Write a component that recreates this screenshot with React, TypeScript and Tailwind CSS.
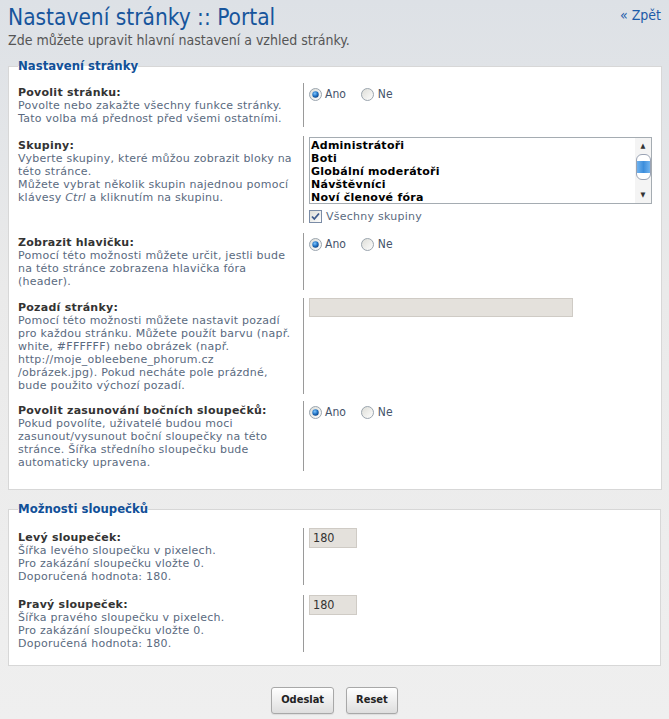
import React from 'react';

const font = "font-['DejaVu_Sans_Condensed','DejaVu_Sans',sans-serif]";
const body = "font-['DejaVu_Sans',sans-serif] text-[11px] leading-[13px] tracking-[0.25px]";

const Radio: React.FC<{ checked?: boolean }> = ({ checked }) => (
    <svg width="13" height="13" viewBox="0 0 13 13" className="shrink-0">
        <defs>
            <linearGradient id="rb" x1="0" y1="0" x2="1" y2="1">
                <stop offset="0" stopColor="#dcdcd6" />
                <stop offset="1" stopColor="#ffffff" />
            </linearGradient>
            <radialGradient id="rd" cx="0.4" cy="0.35" r="0.7">
                <stop offset="0" stopColor="#7fc6ff" />
                <stop offset="0.6" stopColor="#1e6fc0" />
                <stop offset="1" stopColor="#0c3f80" />
            </radialGradient>
        </defs>
        <circle cx="6.5" cy="6.5" r="6" fill="url(#rb)" stroke="#9ba5ae" strokeWidth="1" />
        {checked && <circle cx="6.5" cy="6.5" r="3.2" fill="url(#rd)" />}
    </svg>
);

const YesNo: React.FC = () => (
    <div className="flex items-center text-[12px] leading-[14px] text-[#45546b] pt-[4px]">
        <Radio checked />
        <span className="ml-[3px]">Ano</span>
        <span className="ml-[15px]" />
        <Radio />
        <span className="ml-[4px]">Ne</span>
    </div>
);

const Row: React.FC<{ label: string; lines: React.ReactNode[]; children: React.ReactNode; gap?: string }> = ({
    label,
    lines,
    children,
    gap = 'mb-[9px]',
}) => (
    <div className={`flex ${gap}`}>
        <div className={`${body} w-[285px] shrink-0 pt-[3px] pb-[2px]`}>
            <div className="font-bold text-[#333333]">{label}</div>
            {lines.map((l, i) => (
                <div key={i} className="text-[#5a6a80]">
                    {l}
                </div>
            ))}
        </div>
        <div className="border-l border-[#9a9a9a] pl-[5px] flex-1">{children}</div>
    </div>
);

const Input: React.FC<{ className: string; value?: string }> = ({ className, value }) => (
    <div
        className={`${className} bg-[#e4e1dc] border border-[#cfcbc5] text-[12.5px] leading-[16px] text-[#333] pl-[3px]`}
    >
        {value}
    </div>
);

const groups = ['Administrátoři', 'Boti', 'Globální moderátoři', 'Návštěvníci', 'Noví členové fóra'];

const btn =
    'h-[27px] px-[9px] rounded-[3px] border border-[#a8a8a8] bg-gradient-to-b from-[#ffffff] to-[#dedede] text-[11px] font-bold text-[#222] shadow-[0_1px_1px_rgba(0,0,0,0.08)]';

const App: React.FC = () => {
    return (
        <div className={`${font} min-h-[719px] bg-gradient-to-b from-[#dde1e6] via-[#eaeaea] via-40% to-[#efefef] px-[8px] pt-[3px]`}>
            {/* Header */}
            <div className="flex justify-between items-start">
                <h1 className="text-[22.5px] leading-[28px] text-[#17559c]">Nastavení stránky :: Portal</h1>
                <a className="text-[14px] leading-[16px] mt-[4px] text-[#1c5aa8]">« Zpět</a>
            </div>
            <p className="text-[14px] leading-[16px] text-[#555] mt-[1px]">
                Zde můžete upravit hlavní nastavení a vzhled stránky.
            </p>

            {/* Fieldset 1 */}
            <fieldset className="mt-[11px] border border-[#d7d7d7] bg-white px-[9px] pt-[10px] pb-[18px]">
                <legend className="text-[13px] leading-[14px] font-bold text-[#115098]">Nastavení stránky</legend>

                <Row
                    label="Povolit stránku:"
                    lines={['Povolte nebo zakažte všechny funkce stránky.', 'Tato volba má přednost před všemi ostatními.']}
                >
                    <YesNo />
                </Row>

                <Row
                    label="Skupiny:"
                    lines={[
                        'Vyberte skupiny, které můžou zobrazit bloky na',
                        'této stránce.',
                        'Můžete vybrat několik skupin najednou pomocí',
                        <>
                            klávesy <i>Ctrl</i> a kliknutím na skupinu.
                        </>,
                    ]}
                    gap="mb-[10px]"
                >
                    <div className="pt-[1px]">
                        <div className="w-[343px] h-[67px] border border-[#a5acb2] bg-white flex">
                            <div className="flex-1 pl-[1px] pt-[1px] overflow-hidden">
                                {groups.map((g) => (
                                    <div key={g} className={`${body} font-bold text-black`}>
                                        {g}
                                    </div>
                                ))}
                            </div>
                            {/* scrollbar */}
                            <div className="w-[16px] bg-[#f4f4f4] flex flex-col items-center">
                                <div className="h-[16px] flex items-center justify-center text-[7px] text-[#333]">▲</div>
                                <div className="w-[15px] h-[26px] rounded-[6px] border border-[#9aa3b4] bg-white flex items-center">
                                    <div className="w-full h-[12px] bg-gradient-to-r from-[#6fb2ee] via-[#3c8edc] to-[#6fb2ee]" />
                                </div>
                                <div className="flex-1" />
                                <div className="h-[16px] flex items-center justify-center text-[7px] text-[#333]">▼</div>
                            </div>
                        </div>
                        <div className={`${body} flex items-center mt-[6px] text-[#5a6a80]`}>
                            <svg width="13" height="13" viewBox="0 0 13 13" className="mr-[4px]">
                                <defs>
                                    <linearGradient id="cb" x1="0" y1="0" x2="1" y2="1">
                                        <stop offset="0" stopColor="#dcdcd6" />
                                        <stop offset="1" stopColor="#ffffff" />
                                    </linearGradient>
                                </defs>
                                <rect x="0.5" y="0.5" width="12" height="12" fill="url(#cb)" stroke="#7b8ca6" />
                                <path d="M3 6.5 L5.3 9 L10 3.5" fill="none" stroke="#3d5a8c" strokeWidth="1.8" />
                            </svg>
                            Všechny skupiny
                        </div>
                    </div>
                </Row>

                <Row
                    label="Zobrazit hlavičku:"
                    lines={[
                        'Pomocí této možnosti můžete určit, jestli bude',
                        'na této stránce zobrazena hlavička fóra',
                        '(header).',
                    ]}
                    gap="mb-[8px]"
                >
                    <YesNo />
                </Row>

                <Row
                    label="Pozadí stránky:"
                    lines={[
                        'Pomocí této možnosti můžete nastavit pozadí',
                        'pro každou stránku. Můžete použít barvu (např.',
                        'white, #FFFFFF) nebo obrázek (např.',
                        'http://moje_obleebene_phorum.cz',
                        '/obrázek.jpg). Pokud necháte pole prázdné,',
                        'bude použito výchozí pozadí.',
                    ]}
                    gap="mb-[7px]"
                >
                    <Input className="w-[264px] h-[19px]" />
                </Row>

                <Row
                    gap=""
                    label="Povolit zasunování bočních sloupečků:"
                    lines={[
                        'Pokud povolíte, uživatelé budou moci',
                        'zasunout/vysunout boční sloupečky na této',
                        'stránce. Šířka středního sloupečku bude',
                        'automaticky upravena.',
                    ]}
                >
                    <YesNo />
                </Row>
            </fieldset>

            {/* Fieldset 2 */}
            <fieldset className="mt-[12px] border border-[#d7d7d7] bg-white px-[9px] pt-[12px] pb-[13px]">
                <legend className="text-[13px] leading-[14px] font-bold text-[#115098]">Možnosti sloupečků</legend>

                <Row
                    gap="mb-[10px]"
                    label="Levý sloupeček:"
                    lines={['Šířka levého sloupečku v pixelech.', 'Pro zakázání sloupečku vložte 0.', 'Doporučená hodnota: 180.']}
                >
                    <Input className="w-[48px] h-[20px] pt-[1px]" value="180" />
                </Row>
                <Row
                    gap=""
                    label="Pravý sloupeček:"
                    lines={['Šířka pravého sloupečku v pixelech.', 'Pro zakázání sloupečku vložte 0.', 'Doporučená hodnota: 180.']}
                >
                    <Input className="w-[48px] h-[20px] pt-[1px]" value="180" />
                </Row>
            </fieldset>

            {/* Buttons */}
            <div className="flex justify-center gap-[12px] mt-[21px] pb-[6px]">
                <button className={btn}>Odeslat</button>
                <button className={btn}>Reset</button>
            </div>
        </div>
    );
};

export default App;
